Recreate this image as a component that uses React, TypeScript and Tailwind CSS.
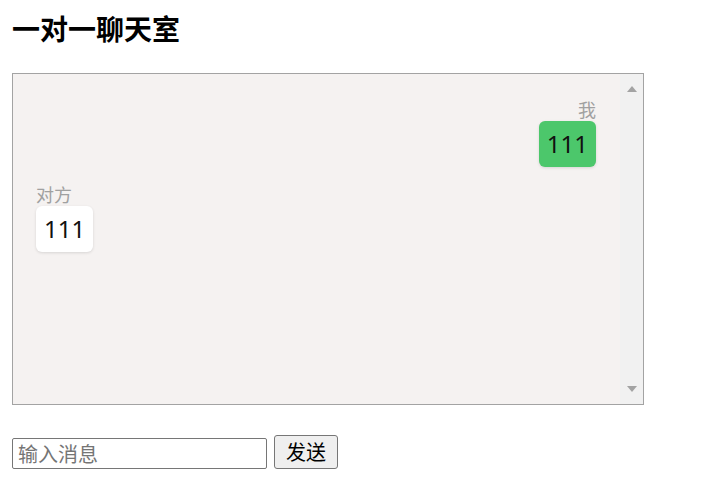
import React from "react";

function Msg({ me, name, text }: { me: boolean; name: string; text: string }) {
  return (
    <div className={me ? "flex flex-col items-end" : "flex flex-col items-start"}>
      <div className="font-['Noto_Sans_CJK_SC',sans-serif] text-[18px] leading-[22px] text-[#a0a0a0]">
        {name}
      </div>
      <div
        className={
          (me ? "bg-[#4cc76b]" : "bg-white") +
          " mt-px rounded-[6px] px-[8px] py-[9px] font-['Noto_Sans','Liberation_Sans',sans-serif] text-[24px] leading-[28px] text-[#111] shadow-[0_1px_3px_rgba(0,0,0,0.12)]"
        }
      >
        {text}
      </div>
    </div>
  );
}

export default function App() {
  return (
    <div className="min-h-[485px] w-[716px] bg-white px-[12px] pt-[12px] font-['Noto_Sans_CJK_SC',sans-serif]">
      <div className="text-[28px] font-bold leading-[32px] text-black">一对一聊天室</div>
      <div className="mt-[29px] flex h-[332px] w-[632px] border border-[#a3a3a3] bg-[#f5f2f1]">
        <div className="flex flex-1 flex-col gap-[16px] pl-[23px] pr-[24px] pt-[24px]">
          <Msg me={true} name="我" text="111" />
          <Msg me={false} name="对方" text="111" />
        </div>
        <div className="flex w-[23px] flex-col items-center justify-between bg-[#f1f1f1] py-[12px]">
          <svg width="10" height="6" viewBox="0 0 10 6">
            <polygon points="0,6 10,6 5,0" fill="#a3a3a3" />
          </svg>
          <svg width="10" height="6" viewBox="0 0 10 6">
            <polygon points="0,0 10,0 5,6" fill="#a3a3a3" />
          </svg>
        </div>
      </div>
      <div className="mt-[30px] flex items-end gap-[7px]">
        <input
          placeholder="输入消息"
          className="h-[31px] w-[255px] rounded-[2px] border border-[#767676] bg-white px-[5px] font-['Noto_Sans_CJK_SC',sans-serif] text-[20px] leading-[29px] text-black outline-none placeholder:text-[#757575]"
        />
        <button className="h-[34px] w-[64px] rounded-[3px] border border-[#767676] bg-[#efefef] font-['Noto_Sans_CJK_SC',sans-serif] text-[20px] leading-[32px] text-black">
          发送
        </button>
      </div>
    </div>
  );
}
